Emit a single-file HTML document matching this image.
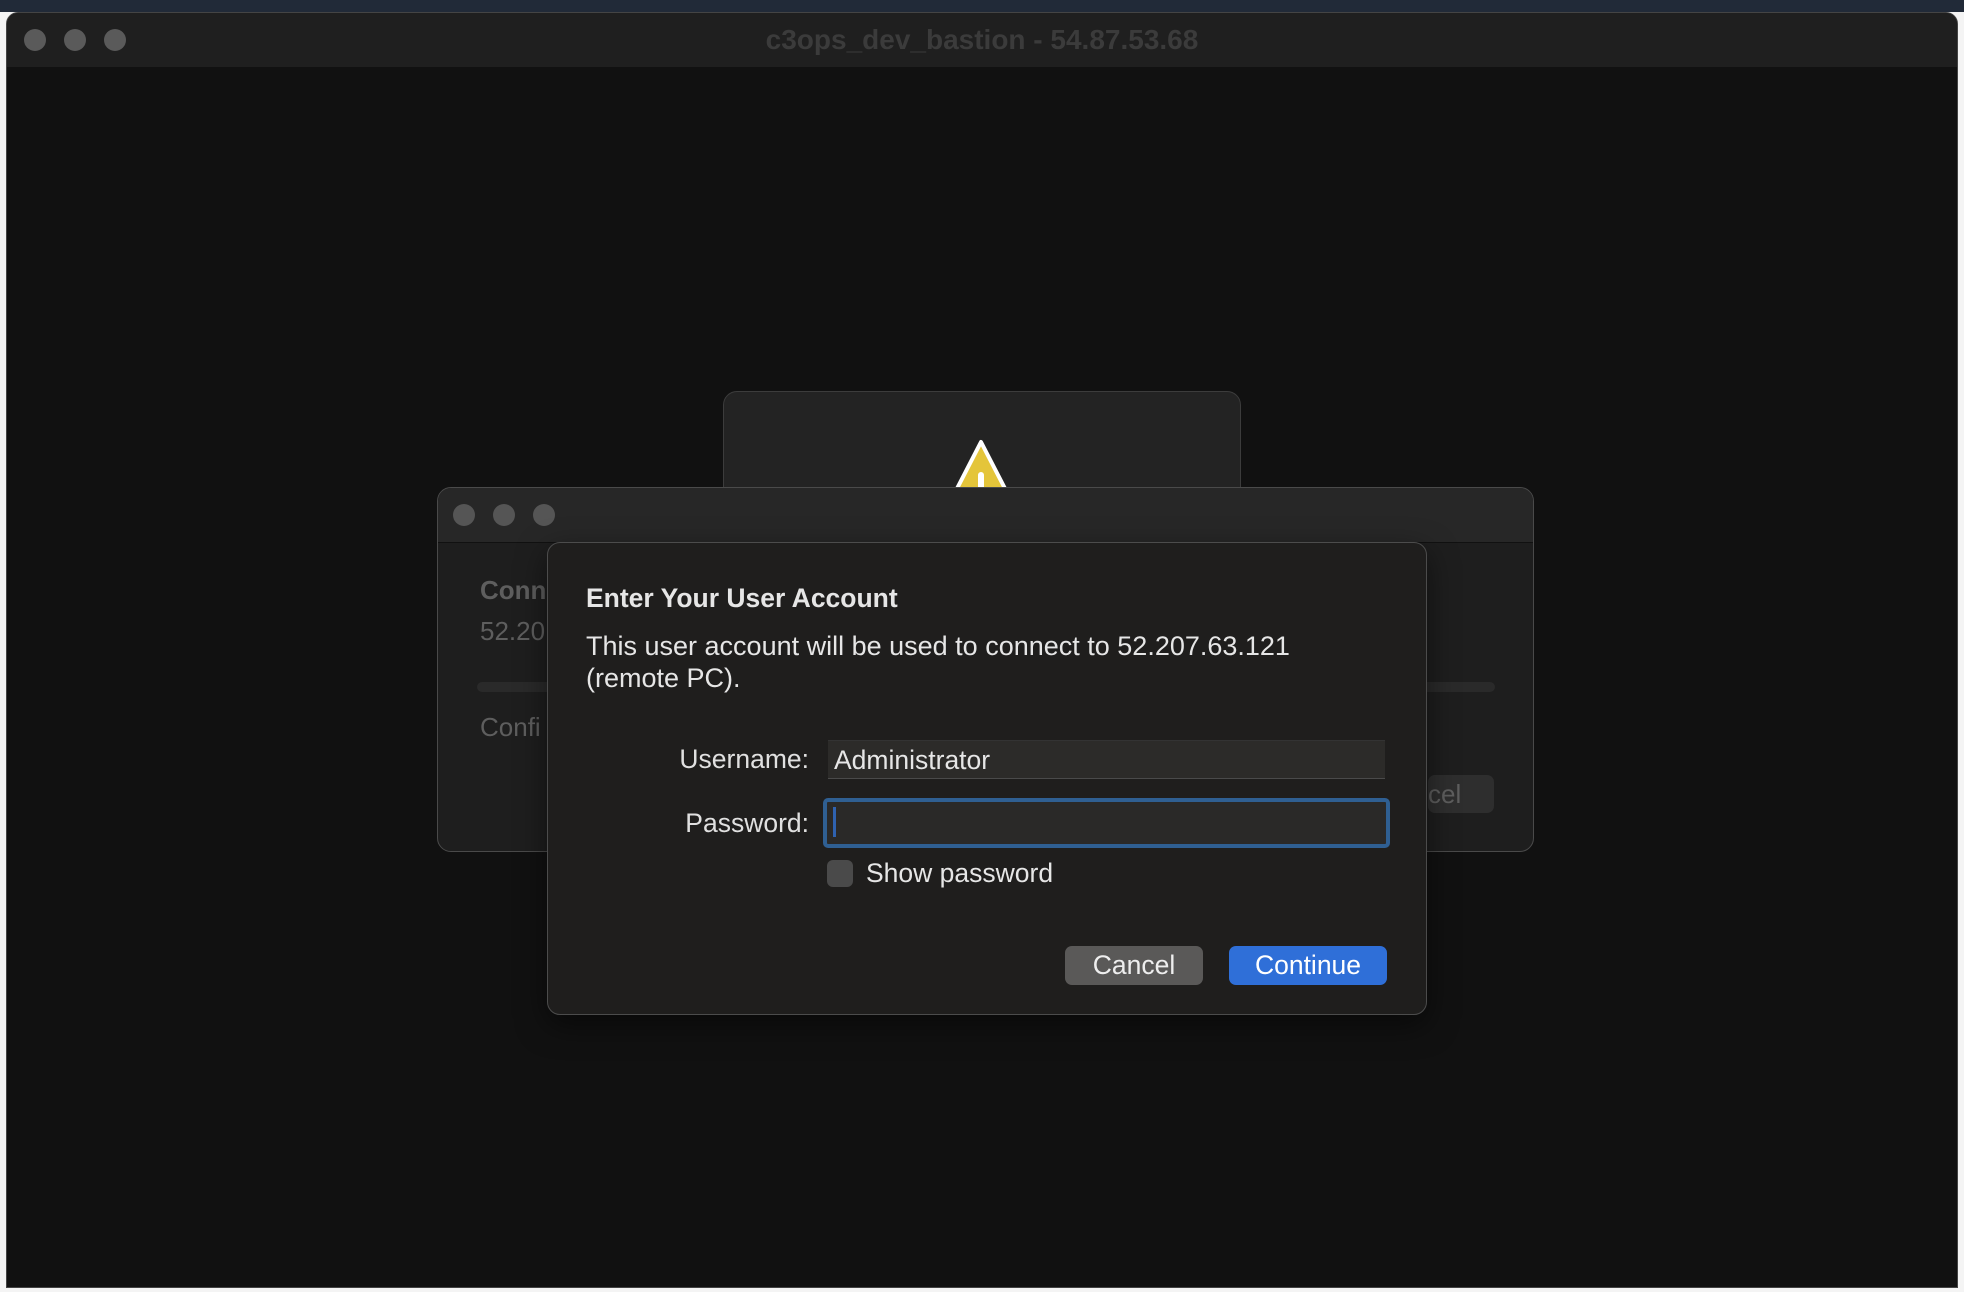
<!DOCTYPE html>
<html><head><meta charset="utf-8"><style>
*{margin:0;padding:0;box-sizing:border-box}
body{width:1964px;height:1292px;background:#f4f4f4;position:relative;overflow:hidden;font-family:"Liberation Sans",sans-serif}
.abs{position:absolute}
.tl{position:absolute;width:22px;height:22px;border-radius:50%;background:#5a5a5a}
</style></head><body>
<div class="abs" style="left:0;top:0;width:1964px;height:12px;background:#212a38"></div>
<div class="abs" style="left:6px;top:12px;width:1952px;height:1276px;background:#111;border-radius:12px 12px 0 0;overflow:hidden;border:1px solid #444">
  <div class="abs" style="left:0;top:0;width:100%;height:54px;background:#1f1f1f"></div>
  <div class="tl" style="left:17px;top:16px"></div>
  <div class="tl" style="left:57px;top:16px"></div>
  <div class="tl" style="left:97px;top:16px"></div>
  <div class="abs" style="left:0;width:100%;top:11px;text-align:center;font-size:28px;font-weight:bold;color:#3b3b3b">c3ops_dev_bastion - 54.87.53.68</div>
</div>
<div class="abs" style="left:723px;top:391px;width:518px;height:120px;background:#232323;border:1px solid #3c3c3c;border-radius:14px"></div>
<svg class="abs" style="left:945px;top:438px" width="72" height="50"><path d="M36 4 L70 70 L2 70 Z" fill="#e4c53a" stroke="#fff" stroke-width="4" stroke-linejoin="round"/><rect x="33" y="34" width="6" height="20" rx="3" fill="#fff"/></svg>
<div class="abs" style="left:437px;top:487px;width:1097px;height:365px;background:#1e1e1e;border:1px solid #4a4a4a;border-radius:14px;overflow:hidden">
  <div class="abs" style="left:0;top:0;width:100%;height:55px;background:#272727;border-bottom:1px solid #111"></div>
  <div class="tl" style="left:15px;top:16px;background:#555"></div>
  <div class="tl" style="left:55px;top:16px;background:#555"></div>
  <div class="tl" style="left:95px;top:16px;background:#555"></div>
  <div class="abs" style="left:42px;top:87px;font-size:26px;font-weight:bold;color:#5e5e5e">Conn</div>
  <div class="abs" style="left:42px;top:128px;font-size:26px;color:#5e5e5e">52.20</div>
  <div class="abs" style="left:39px;top:194px;width:1018px;height:10px;border-radius:5px;background:#2a2a2a"></div>
  <div class="abs" style="left:42px;top:224px;font-size:26px;color:#5e5e5e">Confi</div>
  <div class="abs" style="left:990px;top:287px;width:66px;height:38px;border-radius:7px;background:#2e2e2e;color:#5e5e5e;font-size:26px;line-height:38px">cel</div>
</div>
<div class="abs" style="left:547px;top:542px;width:880px;height:473px;background:#1f1e1d;border:1px solid #4c4c4c;border-radius:13px;box-shadow:0 10px 30px rgba(0,0,0,.5)"></div>
<div class="abs" style="left:586px;top:583px;font-size:26.5px;font-weight:bold;color:#e6e6e6">Enter Your User Account</div>
<div class="abs" style="left:586px;top:630px;font-size:27px;line-height:32px;color:#e6e6e6">This user account will be used to connect to 52.207.63.121<br>(remote PC).</div>
<div class="abs" style="left:600px;width:209px;top:744px;text-align:right;font-size:26.5px;color:#e0e0e0">Username:</div>
<div class="abs" style="left:828px;top:740px;width:557px;height:39px;background:#2c2b29;border-bottom:1px solid #4a4a4a;border-top:1px solid #333;font-size:26.5px;color:#e6e6e6;padding-left:6px;line-height:38px">Administrator</div>
<div class="abs" style="left:600px;width:209px;top:808px;text-align:right;font-size:26.5px;color:#e0e0e0">Password:</div>
<div class="abs" style="left:823px;top:798px;width:567px;height:50px;border:4px solid #2f5f92;border-radius:5px;background:#2a2928"></div>
<div class="abs" style="left:833px;top:807px;width:3px;height:30px;background:#2f62b0"></div>
<div class="abs" style="left:827px;top:860px;width:26px;height:27px;border-radius:6px;background:#4a4a4a"></div>
<div class="abs" style="left:866px;top:858px;font-size:26.5px;color:#e6e6e6">Show password</div>
<div class="abs" style="left:1065px;top:946px;width:138px;height:39px;border-radius:7px;background:#5a5958;color:#eee;font-size:26.5px;line-height:39px;text-align:center">Cancel</div>
<div class="abs" style="left:1229px;top:946px;width:158px;height:39px;border-radius:7px;background:#2f6fd8;color:#fff;font-size:26.5px;line-height:39px;text-align:center">Continue</div>
</body></html>
